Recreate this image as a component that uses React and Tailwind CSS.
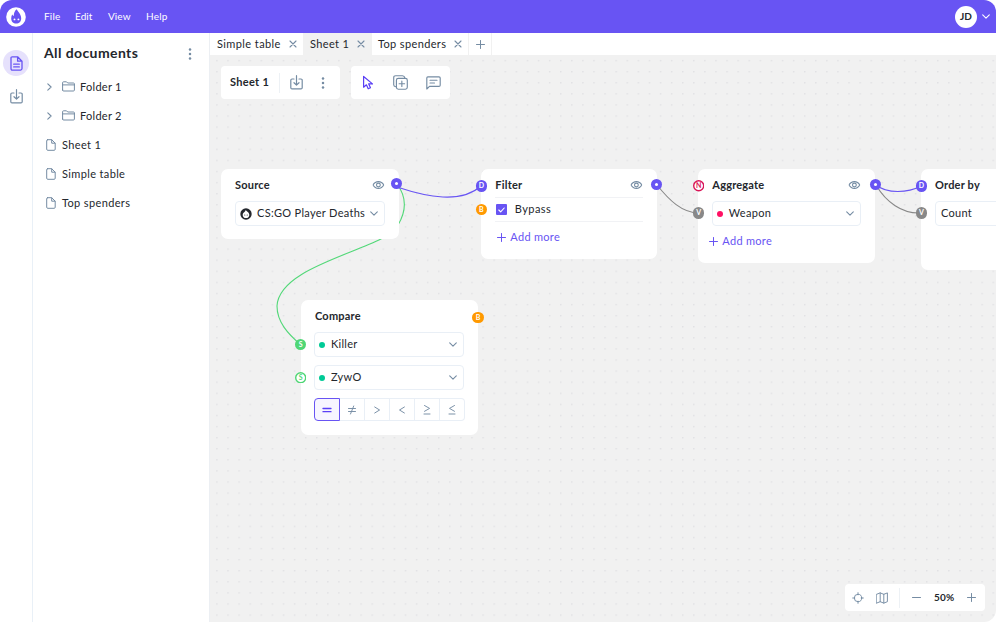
import React from "react";

const ICON = "#758ca3";

function Svg({ w, h = w, vb = "0 0 24 24", sw = 1.6, color = ICON, className = "", children }) {
  return (
    <svg width={w} height={h} viewBox={vb} fill="none" stroke={color} strokeWidth={sw} strokeLinecap="round" strokeLinejoin="round" className={"block shrink-0 " + className}>
      {children}
    </svg>
  );
}

const ChevronDown = ({ color = ICON, w = 8 }) => (
  <Svg w={w} h={5} vb="0 0 8 5" sw={1.1} color={color}><path d="M0.7 0.8 4 4.1 7.3 0.8" /></Svg>
);
const ChevronRight = () => (
  <Svg w={5} h={8} vb="0 0 5 8" sw={1.1}><path d="M0.8 0.8 4.1 4 0.8 7.2" /></Svg>
);
const Close = () => (
  <Svg w={8} vb="0 0 8 8" sw={1.1}><path d="M1 1 7 7M7 1 1 7" /></Svg>
);
const Plus = ({ color = ICON, w = 9 }) => (
  <Svg w={w} vb="0 0 9 9" sw={1} color={color}><path d="M4.5 0.5v8M0.5 4.5h8" /></Svg>
);
const Dots = () => (
  <svg width="4" height="12" viewBox="0 0 4 12" fill={ICON} className="block shrink-0">
    <circle cx="2" cy="1.5" r="1.25" /><circle cx="2" cy="6" r="1.25" /><circle cx="2" cy="10.5" r="1.25" />
  </svg>
);
const Download = () => (
  <Svg w={13} h={15} vb="0 0 13 15" sw={1.2}>
    <path d="M4 4H2Q.8 4 .8 5.200V12.700Q.8 13.900 2 13.900H11Q12.200 13.900 12.200 12.700V5.200Q12.200 4 11 4H9M6.500.7V10M4 7.700 6.500 10.100 9 7.700" />
  </Svg>
);
const Folder = () => (
  <Svg w={13} h={11} vb="0 0 13 11" sw={1}>
    <path d="M.6 9V1.700Q.6.8 1.500.8H4.500L5.700 2H11.500Q12.400 2 12.400 2.900V9Q12.400 10 11.400 10H1.600Q.6 10 .6 9ZM.6 3.900H12.400" />
  </Svg>
);
const FileIcon = () => (
  <Svg w={10} h={12} vb="0 0 10 12" sw={1}>
    <path d="M1.600.7H5.700L9.200 4.200V10.200Q9.200 11.300 8.100 11.300H1.800Q.7 11.300 .7 10.200V1.700Q.7.7 1.600.7ZM5.700.9V4.200H9" />
  </Svg>
);
const Eye = () => (
  <Svg w={12} h={8} vb="0 0 12 8" sw={1.1} className="-translate-x-[0.6px]">
    <path d="M.6 4C2 1.500 3.800.6 6 .6S10 1.500 11.400 4C10 6.500 8.200 7.400 6 7.400S2 6.500.6 4Z" />
    <circle cx="6" cy="4" r="1.900" />
  </Svg>
);

const Flame = ({ size, ring, face }) => (
  <svg width={size} height={size} viewBox="0 0 20 20" className="block shrink-0">
    <circle cx="10" cy="10" r="9.800" fill={ring} />
    <path d="M10.600 2.300C11.800 4.300 15.200 7.300 15.200 11.400C15.200 14.400 13.100 16.400 10.200 16.400S5.200 14.400 5.200 11.400C5.200 9.800 5.600 8.600 6.200 7.500C6.700 8.200 7.200 8.700 7.800 8.900C7.700 6.300 8.700 3.900 10.600 2.300Z" fill={face} />
    <circle cx="8.500" cy="12.400" r=".95" fill={ring} />
    <circle cx="12.400" cy="12.400" r=".95" fill={ring} />
  </svg>
);
const SourceLogo = () => (
  <svg width="12" height="12" viewBox="0 0 12 12" className="block shrink-0">
    <circle cx="6" cy="6" r="5.700" fill="#24272d" />
    <path d="M5.800 2C6.500 3.300 9.300 4.200 9.300 6.900C9.300 8.900 7.900 10 6 10S2.700 8.900 2.700 6.900C2.700 5.500 3.400 4.800 4.200 4.200C4.900 3.800 5.500 3 5.800 2Z" fill="#fff" />
    <circle cx="4.800" cy="7" r=".55" fill="#24272d" /><circle cx="7.200" cy="7" r=".55" fill="#24272d" />
  </svg>
);

function Header() {
  return (
    <header className="flex h-[33px] shrink-0 items-center rounded-t-[12px] bg-[#6854f3] pr-[6px] pl-[6px] text-white">
      <Flame size={20} ring="#fff" face="#6854f3" />
      <nav className="-mt-[2px] ml-[18px] flex text-[10px] leading-4">
        <span className="w-[31px] tracking-[0.2px]">File</span>
        <span className="w-[33px] tracking-[0.1px]">Edit</span>
        <span className="w-[38px] tracking-[0.1px]">View</span>
        <span className="tracking-[0.2px]">Help</span>
      </nav>
      <span className="ml-auto flex size-[22px] items-center justify-center rounded-full bg-white text-[10px] font-bold text-[#24272d]">JD</span>
      <span className="ml-[5px]"><ChevronDown color="#fff" /></span>
    </header>
  );
}

function Rail() {
  return (
    <aside className="flex w-[33px] shrink-0 flex-col items-center border-r border-[#e9f0f7] pt-[17px]">
      <div className="flex size-[26px] items-center justify-center rounded-full bg-[#e6e1fc]">
        <Svg w={13} h={15} vb="0 0 13 15" sw={1.300} color="#6854f3">
          <path d="M2.200.8H7.600L12 5.200V12.600Q12 14.100 10.500 14.100H2.500Q1 14.100 1 12.600V2Q1 .8 2.200.8ZM7.600 1V5.200H11.800M3.700 8.200H9.300M3.700 10.900H9.300" />
        </Svg>
      </div>
      <div className="mt-[13px]"><Download /></div>
    </aside>
  );
}

function Sidebar() {
  return (
    <aside className="flex w-[177px] shrink-0 flex-col border-r border-[#eceff3] text-[#24272d]">
      <div className="mt-[10px] flex h-[22px] items-center justify-between pr-[17px] pl-[11px]">
        <h1 className="-mt-[3px] text-[14px] font-bold tracking-[0.4px]">All documents</h1>
        <Dots />
      </div>
      <ul className="mt-[7px] text-[11px]">
        {["Folder 1", "Folder 2"].map((name) => (
          <li key={name} className="flex h-[29px] items-center pl-[14px]">
            <ChevronRight />
            <span className="ml-[10px]"><Folder /></span>
            <span className="mt-px ml-[5px] tracking-[0.27px]">{name}</span>
          </li>
        ))}
        {["Sheet 1", "Simple table", "Top spenders"].map((name) => (
          <li key={name} className="flex h-[29px] items-center pl-[13px]">
            <FileIcon />
            <span className="mt-px ml-[6px] tracking-[0.36px]">{name}</span>
          </li>
        ))}
      </ul>
    </aside>
  );
}

function Tabs() {
  return (
    <div className="flex h-[22px] shrink-0 bg-white text-[11px] text-[#24272d]">
      <div className="flex w-[93px] items-center justify-between pr-[6px] pl-[7px]"><span className="tracking-[0.4px]">Simple table</span><Close /></div>
      <div className="flex w-[69px] items-center justify-between bg-[#f1f1f1] pr-[7px] pl-[7px]"><span className="tracking-[0.36px]">Sheet 1</span><Close /></div>
      <div className="flex w-[97px] items-center justify-between border-r border-[#f1f1f1] pr-[6px] pl-[6px]"><span className="tracking-[0.36px]">Top spenders</span><Close /></div>
      <div className="flex w-[23px] items-center justify-center border-r border-[#f1f1f1]"><Plus /></div>
    </div>
  );
}

function Toolbar() {
  return (
    <div className="flex gap-[11px] pt-[11px] pl-[11px]">
      <div className="flex h-[33px] w-[119px] items-center rounded-[4px] bg-white pl-[9px] text-[11px] font-bold text-[#24272d]">
        <span className="w-[49px] tracking-[0.3px]">Sheet 1</span>
        <span className="h-5 w-px bg-[#edf1f5]" />
        <span className="ml-[10px]"><Download /></span>
        <span className="ml-[18px]"><Dots /></span>
      </div>
      <div className="flex h-[33px] w-[99px] items-center rounded-[4px] bg-white pl-[11px]">
        <Svg w={12} h={15} vb="0 0 12 15" sw={1.200} color="#5a3ff5">
          <path d="M1.600 1.500V12.200L4.400 9.800 6.200 13.800 8.500 12.800 6.700 8.900H10.500Z" />
        </Svg>
        <Svg w={15} vb="0 0 15 15" sw={1.150} className="ml-[19px]">
          <path d="M2.800 11.700Q.7 11.500.7 9.700V2.700Q.7.7 2.700.7H9.500Q11.500.7 11.800 2.800" />
          <rect x="3.400" y="3.300" width="10.900" height="10.900" rx="1.900" />
          <path d="M8.850 6V11.500M6.100 8.750H11.600" />
        </Svg>
        <Svg w={15} h={14} vb="0 0 15 14" sw={1.150} className="ml-[18px]">
          <path d="M.8 13V1.900Q.8.8 1.900.8H13Q14.200.8 14.200 1.900V9.300Q14.200 10.400 13 10.400H3.500ZM4 4.200H11M4 7H8.500" />
        </Svg>
      </div>
    </div>
  );
}

function Select({ dot, logo, children }) {
  return (
    <div className="flex h-[25px] items-center rounded-[4px] border border-[#e9eff6] px-[6px] text-[11px] tracking-[0.3px] text-[#24272d]">
      {logo && <span className="-ml-[2px] mr-[5px]"><SourceLogo /></span>}
      {dot && <span className={"-ml-[2px] mr-[5.500px] size-[6px] rounded-full " + dot} />}
      <span className="whitespace-nowrap">{children}</span>
      <span className="ml-auto"><ChevronDown /></span>
    </div>
  );
}

function Node({ className, title, eye = true, children }) {
  return (
    <section className={"absolute rounded-[7px] bg-white px-[14px] " + className}>
      <div className="flex h-[31px] items-center justify-between text-[11px] font-bold tracking-[0.2px] text-[#24272d]">
        <h2 className="mt-px whitespace-nowrap">{title}</h2>
        {eye && <Eye />}
      </div>
      {children}
    </section>
  );
}

function AddMore({ className }) {
  return (
    <div className={"flex h-[14px] items-center gap-[4.500px] text-[11px] tracking-[0.3px] text-[#6854f3] " + className}>
      <Plus color="#6854f3" w={9} />
      <span>Add more</span>
    </div>
  );
}

function Port({ className, children }) {
  return (
    <span className={"absolute flex size-[11.400px] items-center justify-center rounded-full text-[7px] leading-none font-bold " + className}>{children}</span>
  );
}
const OutPort = ({ className }) => (
  <Port className={"bg-[#6854f3] " + className}><span className="size-[3px] rounded-full bg-white" /></Port>
);
const RingPort = ({ color, letter, className }) => (
  <Port className={className}>
    <svg width="11.400" height="11.400" viewBox="0 0 11.400 11.400" className="absolute inset-0">
      <circle cx="5.700" cy="5.700" r="5" fill="#fff" stroke={color} strokeWidth="1.400" />
    </svg>
    <span className="relative">{letter}</span>
  </Port>
);

function Operators() {
  const paths = [
    "M1 3.500H9M1 6.700H9",
    "M1.500 3.500H8.500M1.500 6.500H8.500M6.700 1 3.500 9",
    "M2.700 2 7.600 5 2.700 8",
    "M7.400 2 2.500 5 7.400 8",
    "M2.500.5 7.600 3.400 2.500 6.300M2 9H8",
    "M7.500.5 2.500 3.400 7.500 6.300M2 9H8",
  ];
  return (
    <div className="mt-[8px] -ml-[1px] flex h-[23px] w-[151px]">
      {paths.map((d, i) => (
        <span key={i} className={i === 0 ? "flex w-[26px] items-center justify-center rounded-l-[4px] border border-[#6854f3] bg-[#f7f5ff]" : "flex flex-1 items-center justify-center border-y border-r border-[#e9eff6] last:rounded-r-[4px]"}>
          <Svg w={10} vb="0 0 10 10" sw={i === 0 ? 1.300 : 0.950} color={i === 0 ? "#5a3ff5" : ICON}><path d={d} /></Svg>
        </span>
      ))}
    </div>
  );
}

function Canvas() {
  return (
    <main className="relative flex min-h-0 flex-1 flex-col justify-between overflow-hidden rounded-br-[12px] bg-[#f1f1f1]">
      <svg className="absolute inset-0 size-full">
        <defs>
          <pattern id="grid" x="6.200" y="4.900" width="11.090" height="11.090" patternUnits="userSpaceOnUse">
            <circle cx=".8" cy=".8" r=".72" fill="#dcdcdf" />
          </pattern>
        </defs>
        <rect width="100%" height="100%" fill="url(#grid)" />
        <g fill="none" strokeWidth="1.100">
          <path stroke="#52d878" d="M187 129C196 141 197 155 188 170C178 194 69 208 67 251C67 267 78 279 91 290" />
          <path stroke="#6854f3" d="M187 132C217 142 251 149 271 131" />
          <path stroke="#888" d="M447 130C459 145 472 158 489 158" />
          <path stroke="#6854f3" d="M666 130C677 139 698 138 711 131" />
          <path stroke="#888" d="M666 130C676 147 692 159 711 158" />
        </g>
      </svg>
      <div className="relative"><Toolbar /></div>

      <Node title="Source" className="top-[114px] left-[11px] h-[70px] w-[177.500px]">
        <div className="mt-[1px] w-[150px]"><Select logo>CS:GO Player Deaths</Select></div>
      </Node>
      <Node title="Filter" className="top-[114px] left-[271.300px] h-[90px] w-[175.500px]">
        <div className="-mt-[3px] flex h-[25px] items-center border-y border-[#f1f2f5] text-[11px] tracking-[0.43px] text-[#24272d]">
          <span className="ml-[1px] mr-[7.500px] flex size-[11px] items-center justify-center rounded-[1px] bg-[#6854f3]">
            <Svg w={7} h={6} vb="0 0 7 6" sw={1.100} color="#fff"><path d="M.8 3 2.700 4.900 6.200 1" /></Svg>
          </span>
          Bypass
        </div>
        <AddMore className="mt-[8px] ml-[1.500px]" />
      </Node>
      <Node title="Aggregate" className="top-[114px] left-[488.300px] h-[94px] w-[177px]">
        <div className="mt-[1px]"><Select dot="bg-[#ff1064]">Weapon</Select></div>
        <AddMore className="mt-[8px] -ml-[3.500px]" />
      </Node>
      <Node title="Order by" className="top-[114px] left-[711px] h-[101px] w-[178px]">
        <div className="mt-[1px] -mr-[1px]"><Select><span className="-ml-[1px]">Count</span></Select></div>
      </Node>
      <Node title="Compare" eye={false} className="top-[245px] left-[91px] h-[134.500px] w-[177px]">
        <div className="mt-[1px] -ml-[0.600px] flex flex-col gap-[8px]">
          <Select dot="bg-[#00ca96]">Killer</Select>
          <Select dot="bg-[#00ca96]">ZywO</Select>
        </div>
        <Operators />
      </Node>

      <OutPort className="top-[123px] left-[180.700px]" />
      <Port className="top-[125.300px] left-[265.700px] bg-[#6854f3] text-white">D</Port>
      <Port className="top-[149px] left-[265.700px] bg-[#ff9900] text-white">B</Port>
      <OutPort className="top-[124px] left-[440.800px]" />
      <RingPort color="#d91557" letter="N" className="top-[125.300px] left-[483px] text-[#d91557]" />
      <Port className="top-[152.300px] left-[483px] bg-[#888] text-white">V</Port>
      <OutPort className="top-[124px] left-[660px]" />
      <Port className="top-[125.300px] left-[705.700px] bg-[#6854f3] text-white">D</Port>
      <Port className="top-[152.300px] left-[705.700px] bg-[#888] text-white">V</Port>
      <Port className="top-[257px] left-[262.300px] bg-[#ff9900] text-white">B</Port>
      <Port className="top-[284px] left-[85px] bg-[#4fd675] text-white">S</Port>
      <RingPort color="#4fd675" letter="S" className="top-[317px] left-[85px] text-[#4fd675]" />

      <div className="relative mr-[11px] mb-[11px] flex h-[27px] w-[140px] items-center self-end rounded-[4px] bg-white">
        <Svg w={12} vb="0 0 12 12" sw={0.950} className="ml-[7px]"><circle cx="6" cy="6" r="3.700" /><path d="M6 .7V2.800M6 9.200V11.300M.7 6H2.800M9.200 6H11.300" /></Svg>
        <Svg w={12} vb="0 0 12 12" sw={0.950} className="ml-[12px]"><path d="M.6 2.300 4.200.9 7.800 2.300 11.400.9V9.700L7.800 11.100 4.200 9.700.6 11.100ZM4.200.9V9.700M7.800 2.300V11.100" /></Svg>
        <span className="ml-[11px] h-5 w-px bg-[#edf1f5]" />
        <Svg w={9} vb="0 0 9 9" sw={1} className="ml-[12px]"><path d="M.5 4.500H8.500" /></Svg>
        <span className="ml-[13px] w-[33px] text-[10px] font-bold tracking-[0.2px] text-[#24272d]">50%</span>
        <Plus />
      </div>
    </main>
  );
}

export default function App() {
  return (
    <div className="flex h-[622px] w-[996px] flex-col overflow-hidden bg-white font-[Lato,sans-serif]">
      <Header />
      <div className="flex min-h-0 flex-1">
        <Rail />
        <Sidebar />
        <div className="flex min-w-0 flex-1 flex-col">
          <Tabs />
          <Canvas />
        </div>
      </div>
    </div>
  );
}
